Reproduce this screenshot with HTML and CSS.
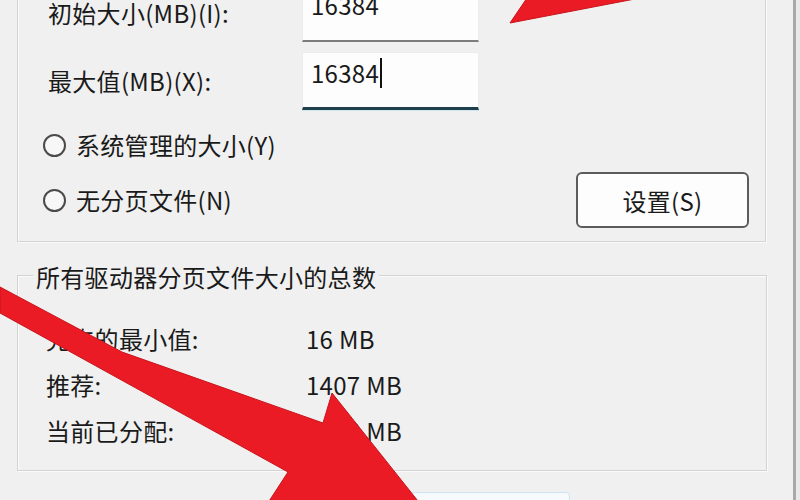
FILE: index.html
```html
<!DOCTYPE html>
<html lang="zh-CN">
<head>
<meta charset="utf-8">
<title>虚拟内存</title>
<link rel="stylesheet" href="styles.css">
</head>
<body>
<div class="stage">
  <div class="dialog">
    <div class="group g1">
      <div class="field">
        <span class="label">初始大小(MB)(I):</span>
        <div class="input"><span class="val">16384</span></div>
      </div>
      <div class="field">
        <span class="label">最大值(MB)(X):</span>
        <div class="input focused"><span class="val caret">16384</span></div>
      </div>
      <div class="radio-row">
        <span class="radio"></span><span class="rtext">系统管理的大小(Y)</span>
      </div>
      <div class="radio-row last">
        <span class="radio"></span><span class="rtext">无分页文件(N)</span>
        <button class="btn">设置(S)</button>
      </div>
    </div>
    <div class="group g2">
      <div class="legend">所有驱动器分页文件大小的总数</div>
      <div class="stat"><span class="k">允许的最小值:</span><span class="v">16 MB</span></div>
      <div class="stat"><span class="k">推荐:</span><span class="v">1407 MB</span></div>
      <div class="stat"><span class="k">当前已分配:</span><span class="v">1408 MB</span></div>
    </div>
    <div class="buttons"><div class="okbtn"></div></div>
  </div>
  <svg class="arrows" width="800" height="500" viewBox="0 0 800 500">
    <polygon class="arrow" points="510,23 527,-2 640,-2"/>
    <polygon class="arrow" points="0,287 122,352 323,423 332,393 445,535 262,512 288,472 0,313"/>
  </svg>
</div>
</body>
</html>
```
FILE: styles.css
```css
html, body {
  margin: 0;
  padding: 0;
}
body {
  background: #e9e9e9;
  font-family: "Noto Sans CJK SC", "Noto Sans", sans-serif;
  color: #1a1a1a;
  font-size: 24px;
}
.stage {
  width: 800px;
  height: 500px;
  overflow: hidden;
  position: relative;
  background: #e9e9e9;
}
.dialog {
  width: 776px;
  height: 560px;
  padding-left: 17px;
  background: #f0f0f0;
  border-right: 3px solid #a9a9a9;
}
.group {
  border: 1px solid #d3d3d3;
  box-shadow: inset 1px 1px 0 #fbfbfb, 1px 1px 0 #fbfbfb;
  letter-spacing: 0.3px;
}
.g1 {
  margin-top: -40px;
  padding: 23px 16px 13px 30px;
  box-sizing: border-box;
  width: 749px;
}
.field {
  display: flex;
  align-items: center;
  height: 58px;
}
.field + .field {
  margin-top: 10px;
}
.label {
  width: 254px;
  line-height: 30px;
  white-space: nowrap;
}
.input {
  width: 177px;
  height: 58px;
  box-sizing: border-box;
  background: #fdfdfd;
  border: 1px solid #ececec;
  border-bottom: 2px solid #7c7c7c;
  display: flex;
  align-items: center;
  padding-left: 8px;
  padding-bottom: 15px;
}
.input.focused {
  border-bottom: 3px solid #203f4c;
  box-shadow: 0 1px 0 #cfe6ee;
}
.val {
  line-height: 30px;
}
.caret {
  border-right: 2px solid #111;
  padding-right: 1px;
}
.radio-row {
  display: flex;
  align-items: center;
  height: 40px;
  margin-top: 15px;
  margin-left: -5px;
}
.radio-row.last {
  height: 56px;
  margin-top: 7px;
}
.radio {
  width: 23px;
  height: 23px;
  box-sizing: border-box;
  border: 2px solid #4a4a4a;
  border-radius: 50%;
  background: #f7f7f7;
  margin-right: 10px;
}
.rtext {
  line-height: 30px;
  white-space: nowrap;
}
.btn {
  margin-left: auto;
  width: 173px;
  height: 56px;
  box-sizing: border-box;
  border: 2px solid #5c5c5c;
  border-radius: 6px;
  background: #fdfdfd;
  font-family: inherit;
  font-size: 24px;
  letter-spacing: 0.3px;
  color: #1a1a1a;
  padding: 0;
}
.g2 {
  margin-top: 33px;
  padding: 0 0 16px 28px;
  box-sizing: border-box;
  width: 750px;
}
.legend {
  display: block;
  width: fit-content;
  margin-top: -14px;
  margin-left: -13px;
  padding: 0 3px;
  background: #f0f0f0;
  line-height: 30px;
  white-space: nowrap;
}
.stat {
  display: flex;
  align-items: center;
  height: 46px;
}
.legend + .stat {
  margin-top: 24px;
}
.k {
  width: 260px;
  line-height: 30px;
  white-space: nowrap;
}
.v {
  line-height: 30px;
  white-space: nowrap;
}
.buttons {
  display: flex;
  margin-top: 21px;
  padding-left: 393px;
}
.okbtn {
  width: 160px;
  height: 30px;
  box-sizing: border-box;
  border: 1px solid #cfe3f3;
  border-radius: 4px;
  background: #f7fafd;
}
.arrows {
  position: absolute;
  left: 0;
  top: 0;
}
.arrow {
  fill: #ea1b24;
  stroke: #c8141b;
  stroke-width: 1;
  stroke-linejoin: round;
}
```
